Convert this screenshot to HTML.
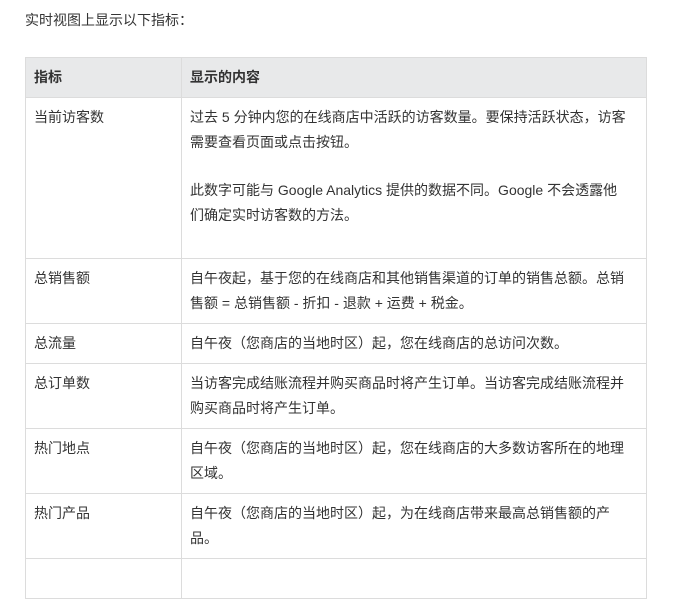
<!DOCTYPE html>
<html><head><meta charset="utf-8"><style>
body{margin:0;background:#fff;font-family:"Liberation Sans","Noto Sans CJK SC",sans-serif;font-size:14px;color:#333;}
.t{position:absolute;left:25px;top:8px;line-height:25px;}
table{position:absolute;left:25px;top:57px;width:622px;border-collapse:collapse;}
td,th{border:1px solid #dcdcdc;vertical-align:top;text-align:left;padding:7px 8px;line-height:25px;white-space:nowrap;}
th{background:#e8e9ea;font-weight:bold;height:25px;}
td:first-child,th:first-child{width:139px;}
p{margin:0 0 23px 0;}
</style></head><body>
<div class="t">实时视图上显示以下指标：</div>
<table>
<tr><th>指标</th><th>显示的内容</th></tr>
<tr><td>当前访客数</td><td><p>过去 5 分钟内您的在线商店中活跃的访客数量。要保持活跃状态，访客<br>需要查看页面或点击按钮。</p><p>此数字可能与 Google Analytics 提供的数据不同。Google 不会透露他<br>们确定实时访客数的方法。</p></td></tr>
<tr><td>总销售额</td><td>自午夜起，基于您的在线商店和其他销售渠道的订单的销售总额。总销<br>售额 = 总销售额 - 折扣 - 退款 + 运费 + 税金。</td></tr>
<tr><td>总流量</td><td>自午夜（您商店的当地时区）起，您在线商店的总访问次数。</td></tr>
<tr><td>总订单数</td><td>当访客完成结账流程并购买商品时将产生订单。当访客完成结账流程并<br>购买商品时将产生订单。</td></tr>
<tr><td>热门地点</td><td>自午夜（您商店的当地时区）起，您在线商店的大多数访客所在的地理<br>区域。</td></tr>
<tr><td>热门产品</td><td>自午夜（您商店的当地时区）起，为在线商店带来最高总销售额的产<br>品。</td></tr>
<tr><td>&nbsp;</td><td>&nbsp;</td></tr>
</table>
</body></html>
